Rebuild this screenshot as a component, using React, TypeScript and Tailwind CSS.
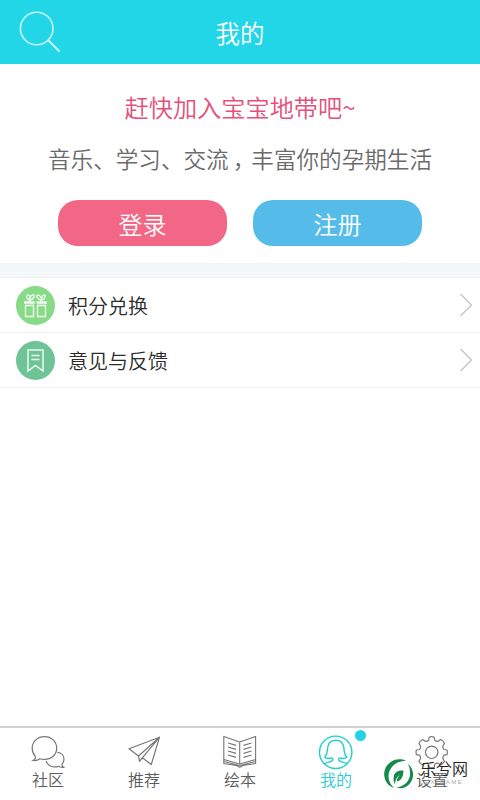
import type { ReactNode } from 'react';

const FONT = "font-['Noto_Sans_CJK_SC',sans-serif] font-[350]";

function SearchIcon() {
  return (
    <svg className="w-11 h-11" viewBox="0 0 44 44" fill="none" stroke="#c8f8fb" strokeWidth="1.6">
      <circle cx="18.7" cy="18.5" r="16.3" />
      <path d="M30.3 30.3L41.5 41.5" strokeWidth="2" />
    </svg>
  );
}

function GiftIcon() {
  return (
    <svg className="w-[39px] h-[39px]" viewBox="0 0 39 39" fill="none" stroke="#f4fdf2" strokeWidth="1.3">
      <circle cx="19.5" cy="19.5" r="19.5" fill="#87db86" stroke="none" />
      <path d="M9.5 19.5h8v11h-8zM21.5 19.5h8v11h-8z" />
      <path d="M8 16.5h10.500M20.500 16.500h10.500" strokeWidth="2.4" />
      <path d="M13.500 14.500C11.500 13 10 11 11 9.500S14.500 9.800 14.500 12.500M13.500 14.500C13.500 11 15.500 8.500 17.500 9S17.500 13 13.500 14.500z" />
      <path d="M25.500 14.500C21.500 13 19.800 9.800 21.500 9S25.500 11 25.500 14.500zM25.500 14.500C25.500 11 27.200 8.200 28.600 9S28.500 13.500 25.500 14.500z" />
    </svg>
  );
}

function FeedbackIcon() {
  return (
    <svg className="w-[39px] h-[39px]" viewBox="0 0 39 39" fill="none" stroke="#ecf9f2" strokeWidth="1.5">
      <circle cx="19.5" cy="19.5" r="19.5" fill="#6ec497" stroke="none" />
      <path d="M12 9h15v21l-7.500-5.500L12 30z" />
      <path d="M15.500 14.500h8M15.500 18.500h8" />
    </svg>
  );
}

function ChatIcon() {
  return (
    <svg className="w-10 h-9" viewBox="0 0 40 36" fill="none" stroke="#777" strokeWidth="1.2">
      <path d="M5 28.500C7 27.500 7.800 26 7.200 24.200C5.300 22.200 4.200 19.500 4.200 16.200C4.200 9.600 9.700 4.600 16.500 4.600S28.700 9.600 28.700 16.200S23.300 27.300 16.500 27.300C14.800 27.300 13.300 27.200 11.800 26.700C10 28.300 7.500 28.800 5 28.500z" />
      <path d="M29.500 20.300C33.300 20.500 36 23.200 36 27C36 29.300 35.300 30.800 34 32C33.800 33.500 34.300 34.500 35.500 35.300C33.500 35.500 31.800 35.200 30.300 34.300C24.500 36 19.300 33.500 18.200 28.800" />
    </svg>
  );
}

function PlaneIcon() {
  return (
    <svg className="w-10 h-9" viewBox="0 0 40 36" fill="none" stroke="#777" strokeWidth="1.2" strokeLinejoin="round">
      <path d="M14.500 24L5 16.700L35.500 5.200L27.300 32.500L18.300 25.800L35.500 5.200L14.500 24L15.600 29.300L18.300 25.800" />
    </svg>
  );
}

function BookIcon() {
  return (
    <svg className="w-10 h-9" viewBox="0 0 40 36" fill="none" stroke="#777" strokeWidth="1.1">
      <path d="M19.700 10L3.800 4.500V27.500L19.700 32L35.600 27.500V4.500zV32" />
      <path d="M3.800 27.500V31.500L16.500 33.500L19.700 35.300L22.900 33.500L35.600 31.500V27.500M3.800 29.500L19.700 33.500L35.600 29.500" />
      <path d="M8 11l8 2.400M8 15l8 2.400M8 19l8 2.400M8 23l8 2.400M31.500 11l-8 2.400M31.500 15l-8 2.400M31.500 19l-8 2.400M31.500 23l-8 2.400" />
    </svg>
  );
}

function ProfileIcon() {
  return (
    <svg className="w-10 h-9 overflow-visible" viewBox="0 0 40 36" fill="none" stroke="#22cfd0" strokeWidth="1.4">
      <circle cx="19.700" cy="20.300" r="16.200" />
      <path d="M8.500 32C10.500 29.500 17 30.500 17 27.500C17 26 15.500 25.800 14 26.200C11.500 26.800 9.300 26 8.700 25C12 22 11 17.500 12 14C13 10.500 15.500 8.300 19.700 8.300S26.500 10.500 27.500 14C28.500 17.500 27.500 22 30.800 25C30 26 28 26.800 25.500 26.200C24 25.800 22.500 26 22.500 27.500C22.500 30.500 29 29.500 31 32" />
    </svg>
  );
}

function GearIcon() {
  return (
    <svg className="w-10 h-9 overflow-visible" viewBox="0 0 40 36" fill="none" stroke="#7a7a7a" strokeWidth="1.2" strokeLinejoin="round">
      <circle cx="19.700" cy="20.300" r="6.200" />
      <path d="M17.200 5.200Q19.700 4 22.200 5.200L22.800 8.300Q24.300 9.700 26.200 9.200L28.600 7.500Q31.200 8.500 32.500 11.300L30.800 14.100Q30.600 15.900 31.900 17.500L35 18Q35.800 20.300 35 22.700L31.900 23.200Q30.600 24.800 30.900 26.600L32.500 29.200Q31.200 32 28.600 33L26.100 31.300Q24.300 30.900 22.800 32.300L22.200 35.400Q19.700 36.500 17.200 35.400L16.600 32.300Q15.100 30.900 13.300 31.300L10.800 33Q8.200 32 6.900 29.200L8.500 26.600Q8.800 24.800 7.500 23.200L4.400 22.700Q3.600 20.300 4.400 18L7.500 17.500Q8.800 15.900 8.600 14.100L6.900 11.300Q8.200 8.500 10.800 7.500L13.200 9.200Q15.100 9.700 16.600 8.300z" />
    </svg>
  );
}

interface MenuRowProps { label: string; icon: ReactNode; }

function MenuRow({ label, icon }: MenuRowProps) {
  return (
    <div className="h-[55px] flex items-center border-b border-[#f0f0f0] pl-4 pr-[7px]">
      {icon}
      <span className="ml-[13px] mt-px flex-1 text-[20px] leading-none text-[#2b2b2b]">{label}</span>
      <svg className="w-[14px] h-6" viewBox="0 0 14 24" fill="none" stroke="#c4c4c4" strokeWidth="1.3">
        <path d="M1.500 1L12.500 12L1.500 23" />
      </svg>
    </div>
  );
}

const TABS = [
  { label: '社区', icon: <ChatIcon /> },
  { label: '推荐', icon: <PlaneIcon /> },
  { label: '绘本', icon: <BookIcon /> },
  { label: '我的', icon: <ProfileIcon />, active: true },
  { label: '设置', icon: <GearIcon /> },
];

function Watermark() {
  return (
    <div className="absolute left-[383px] top-[758px] flex">
      <svg className="w-[31px] h-[31px]" viewBox="0 0 31 31" fill="#148a48">
        <path d="M23 2.800C14-1.500 3.500 4 1.500 13C0 21 4 27.500 11 30C5.500 25 4 18 7 12C10 6 16 3 23 2.800z" />
        <path d="M24.500 5.500C31 10 32 20 26.500 26C23 30 17.500 31 13.500 29.500C21 28.500 26.500 23.500 27 16.500C27.200 12 26.500 8.500 24.500 5.500z" />
        <path d="M20.500 12.500C16 12 11.500 14 10.800 18C10.300 21 10.500 24.500 12.200 26.500C12 23.500 12.500 20.500 17 16.500C14.500 20 13.800 21.500 13.800 23.500C19 22.500 20.300 17.500 20.500 12.500z" />
      </svg>
      <div className="ml-[6px] mt-px">
        <p className="text-[16px] leading-[18px] text-[#222]">乐兮网</p>
        <p className="mt-px text-[6px] leading-[8px] tracking-[1.6px] text-[#aaa] font-['Liberation_Sans',sans-serif]">LEXIGAME</p>
      </div>
    </div>
  );
}

export default function App() {
  return (
    <div className={`relative w-[480px] h-[800px] overflow-hidden bg-white flex flex-col ${FONT}`}>
      <header className="h-16 bg-[#23d6e7] grid grid-cols-[1fr_auto_1fr] items-center px-[18px]">
        <SearchIcon />
        <h1 className="mt-[2px] text-[24.500px] leading-none text-white">我的</h1>
      </header>

      <section className="h-[199px] pt-[30px] text-center">
        <p className="text-[24.200px] leading-[26px] text-[#e5507a]">赶快加入宝宝地带吧~</p>
        <p className="mt-[26px] text-[22.600px] leading-[26px] text-[#6a6a6a] whitespace-nowrap">
          音乐、学习、交流<span className="ml-[4px] -mr-[4px]">，</span>丰富你的孕期生活
        </p>
        <div className="mt-[28px] flex justify-center gap-[26px] text-[24px] leading-none text-white">
          <button className="w-[169px] h-[46px] pt-px rounded-[20px] bg-[#f26686]">登录</button>
          <button className="w-[169px] h-[46px] pt-px rounded-[20px] bg-[#55bce9]">注册</button>
        </div>
      </section>

      <div className="h-[15px] bg-[#f4f8f9] border-y border-[#f0f3f3]" />
      <MenuRow label="积分兑换" icon={<GiftIcon />} />
      <MenuRow label="意见与反馈" icon={<FeedbackIcon />} />

      <nav className="mt-auto h-[74px] border-t-2 border-[#d0d0d0] pt-1 grid grid-cols-5">
        {TABS.map((tab) => (
          <div key={tab.label} className="relative flex flex-col items-center">
            {tab.icon}
            <span className={`mt-px text-[16px] leading-5 ${tab.active ? 'text-[#2accd8]' : 'text-[#5c5c5c]'}`}>{tab.label}</span>
            {tab.active && <i className="absolute left-[67px] -top-[2px] w-[11px] h-[11px] rounded-full bg-[#23d3e5]" />}
          </div>
        ))}
      </nav>
      <Watermark />
    </div>
  );
}
